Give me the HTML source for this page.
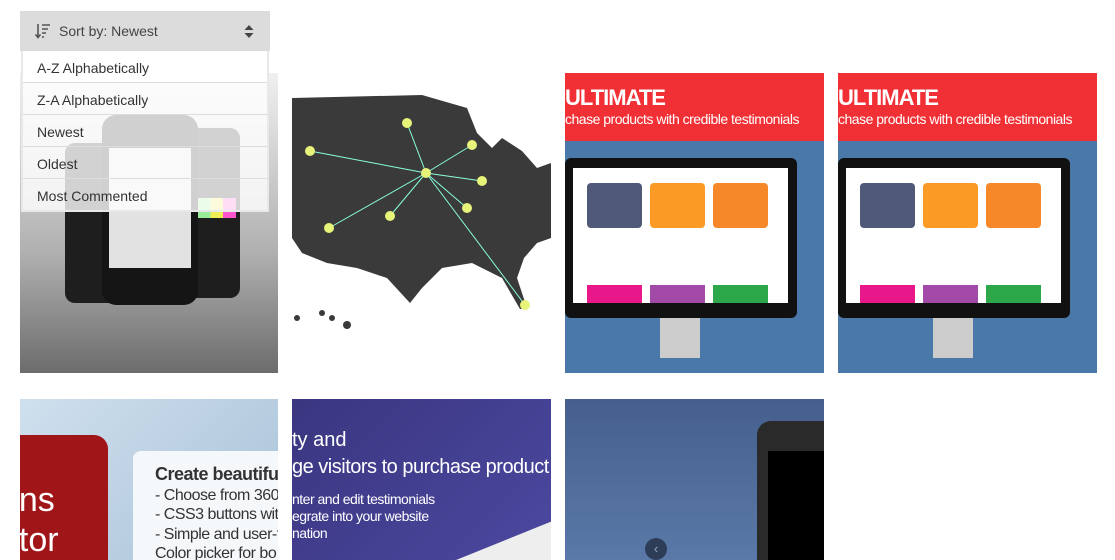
<!DOCTYPE html>
<html><head><style>
body{margin:0;width:1115px;height:560px;overflow:hidden;background:#fff;font-family:"Liberation Sans",sans-serif;position:relative}
.t{position:absolute;overflow:hidden}
.dd{position:absolute;left:20px;top:11px;width:250px}
.hd{height:40px;background:#dcdcdc;color:#444;font-size:14px;line-height:40px;position:relative}
.hd span{position:absolute;left:39px}
.list{background:rgba(255,255,255,.8);border:2px solid #e8e8e8;border-top:0;margin:0 1px}
.it{height:31px;border-bottom:1px solid #ddd;font-size:14px;color:#333;line-height:34px;padding-left:14px}
.it:last-child{border-bottom:0}
</style></head><body>
<div class="t" style="left:20px;top:73px;width:258px;height:300px;background:linear-gradient(#f0f0f0,#b0b0b0 60%,#6c6c6c)">
 <div style="position:absolute;left:45px;top:70px;width:55px;height:160px;background:#1e1e1e;border-radius:10px"></div>
 <div style="position:absolute;left:165px;top:55px;width:55px;height:170px;background:#1e1e1e;border-radius:10px"></div>
 <div style="position:absolute;left:82px;top:42px;width:96px;height:190px;background:#151515;border-radius:14px"></div>
 <div style="position:absolute;left:89px;top:75px;width:82px;height:120px;background:#e2e2e2"></div>
 <div style="position:absolute;left:178px;top:125px;width:38px;height:20px;background:linear-gradient(90deg,#9e9 33%,#ee5 33% 66%,#f5c 66%)"></div>
</div>
<div class="t" style="left:292px;top:73px;width:259px;height:300px;background:#fff">
<svg width="259" height="300"><path d="M0 25 L130 22 L175 35 L185 60 L200 75 L210 65 L230 78 L245 95 L259 90 L259 165 L245 170 L232 185 L225 205 L235 235 L228 236 L210 205 L180 190 L150 195 L130 215 L118 230 L95 205 L65 195 L35 190 L10 180 L0 165Z" fill="#3a3a3a"/>
<g fill="#3a3a3a"><circle cx="30" cy="240" r="3"/><circle cx="40" cy="245" r="3"/><circle cx="55" cy="252" r="4"/><circle cx="5" cy="245" r="3"/></g>
<g stroke="#8fd" stroke-width="1" fill="none"><path d="M134 100L115 50M134 100L180 72M134 100L190 108M134 100L175 135M134 100L98 143M134 100L37 155M134 100L18 78M134 100L233 232"/></g>
<g fill="#e8f37a"><circle cx="134" cy="100" r="5"/><circle cx="115" cy="50" r="5"/><circle cx="180" cy="72" r="5"/><circle cx="190" cy="108" r="5"/><circle cx="175" cy="135" r="5"/><circle cx="98" cy="143" r="5"/><circle cx="37" cy="155" r="5"/><circle cx="18" cy="78" r="5"/><circle cx="233" cy="232" r="5"/></g></svg>
</div>
<div class="t" style="left:565px;top:73px;width:259px;height:300px;background:#4a78a8">
 <div style="height:68px;background:#f03035;color:#fff"><div style="font:bold 22px 'Liberation Sans';padding-top:12px;letter-spacing:-1px">ULTIMATE</div><div style="font-size:14px;letter-spacing:-.5px">chase products with credible testimonials</div></div>
 <div style="position:absolute;left:0;top:85px;width:232px;height:160px;background:#111;border-radius:6px"></div>
 <div style="position:absolute;left:8px;top:95px;width:215px;height:135px;background:#fff"></div>
 <div style="position:absolute;left:22px;top:110px;width:55px;height:45px;background:#505a78;border-radius:4px"></div>
 <div style="position:absolute;left:85px;top:110px;width:55px;height:45px;background:#fb9a25;border-radius:4px"></div>
 <div style="position:absolute;left:148px;top:110px;width:55px;height:45px;background:#f7882a;border-radius:4px"></div>
 <div style="position:absolute;left:22px;top:212px;width:55px;height:18px;background:#e8178a"></div>
 <div style="position:absolute;left:85px;top:212px;width:55px;height:18px;background:#a34aa8"></div>
 <div style="position:absolute;left:148px;top:212px;width:55px;height:18px;background:#2ca84a"></div>
 <div style="position:absolute;left:95px;top:245px;width:40px;height:40px;background:#ccc"></div>
</div>
<div class="t" style="left:838px;top:73px;width:259px;height:300px;background:#4a78a8">
 <div style="height:68px;background:#f03035;color:#fff"><div style="font:bold 22px 'Liberation Sans';padding-top:12px;letter-spacing:-1px">ULTIMATE</div><div style="font-size:14px;letter-spacing:-.5px">chase products with credible testimonials</div></div>
 <div style="position:absolute;left:0;top:85px;width:232px;height:160px;background:#111;border-radius:6px"></div>
 <div style="position:absolute;left:8px;top:95px;width:215px;height:135px;background:#fff"></div>
 <div style="position:absolute;left:22px;top:110px;width:55px;height:45px;background:#505a78;border-radius:4px"></div>
 <div style="position:absolute;left:85px;top:110px;width:55px;height:45px;background:#fb9a25;border-radius:4px"></div>
 <div style="position:absolute;left:148px;top:110px;width:55px;height:45px;background:#f7882a;border-radius:4px"></div>
 <div style="position:absolute;left:22px;top:212px;width:55px;height:18px;background:#e8178a"></div>
 <div style="position:absolute;left:85px;top:212px;width:55px;height:18px;background:#a34aa8"></div>
 <div style="position:absolute;left:148px;top:212px;width:55px;height:18px;background:#2ca84a"></div>
 <div style="position:absolute;left:95px;top:245px;width:40px;height:40px;background:#ccc"></div>
</div>
<div class="t" style="left:20px;top:399px;width:258px;height:161px;background:linear-gradient(135deg,#cfe0ee,#a9c2d8)">
 <div style="position:absolute;left:-20px;top:36px;width:108px;height:140px;background:#a01518;border-radius:14px;color:#fff;font-size:34px;line-height:40px;padding-top:45px;white-space:nowrap">&nbsp;&nbsp;ns<br>ator</div>
 <div style="position:absolute;left:113px;top:52px;width:160px;height:120px;background:#f5f8fb;border-radius:8px;color:#333;font-size:16px;padding:14px 0 0 22px;line-height:19.5px;white-space:nowrap;letter-spacing:-.5px"><b style="font-size:18px">Create beautiful</b><br>- Choose from 360-<br>- CSS3 buttons with<br>- Simple and user-f<br>Color picker for bo</div>
</div>
<div class="t" style="left:292px;top:399px;width:259px;height:161px;background:linear-gradient(135deg,#3b3680,#4b48a0);color:#fff;white-space:nowrap">
 <div style="position:absolute;left:0;top:30px;font-size:20px">ty and</div>
 <div style="position:absolute;left:0;top:57px;font-size:20px;letter-spacing:-.5px">ge visitors to purchase product</div>
 <div style="position:absolute;left:0;top:92px;font-size:14px;line-height:17px;letter-spacing:-.5px">nter and edit testimonials<br>egrate into your website<br>nation</div>
 <div style="position:absolute;left:150px;top:140px;width:140px;height:40px;background:#eee;transform:rotate(-22deg)"></div>
</div>
<div class="t" style="left:565px;top:399px;width:259px;height:161px;background:linear-gradient(#465f8c,#5a79a8)">
 <div style="position:absolute;left:192px;top:22px;width:80px;height:160px;background:#2a2a2a;border-radius:14px 0 0 0"></div>
 <div style="position:absolute;left:203px;top:52px;width:70px;height:120px;background:#000"></div>
 <div style="position:absolute;left:80px;top:139px;width:22px;height:22px;border-radius:50%;background:#2d3d58;color:#9ab;font-size:13px;text-align:center;line-height:22px">‹</div>
</div>
<div class="dd">
 <div class="hd">
  <svg style="position:absolute;left:15px;top:12px" width="16" height="16" viewBox="0 0 16 16"><path d="M3 1v13M0.5 11.5L3 14.5 5.5 11.5" stroke="#555" stroke-width="1.6" fill="none"/><path d="M7 2h8M7 6h6M7 10h4M7 14h2" stroke="#555" stroke-width="1.6"/></svg>
  <span>Sort by: Newest</span>
  <svg style="position:absolute;left:224px;top:14px" width="10" height="13"><path d="M5 0L9.5 5H0.5Z M5 13L9.5 8H0.5Z" fill="#444"/></svg>
 </div>
 <div class="list">
  <div class="it" style="background:#fff">A-Z Alphabetically</div>
  <div class="it">Z-A Alphabetically</div>
  <div class="it">Newest</div>
  <div class="it">Oldest</div>
  <div class="it">Most Commented</div>
 </div>
</div>
</body></html>
